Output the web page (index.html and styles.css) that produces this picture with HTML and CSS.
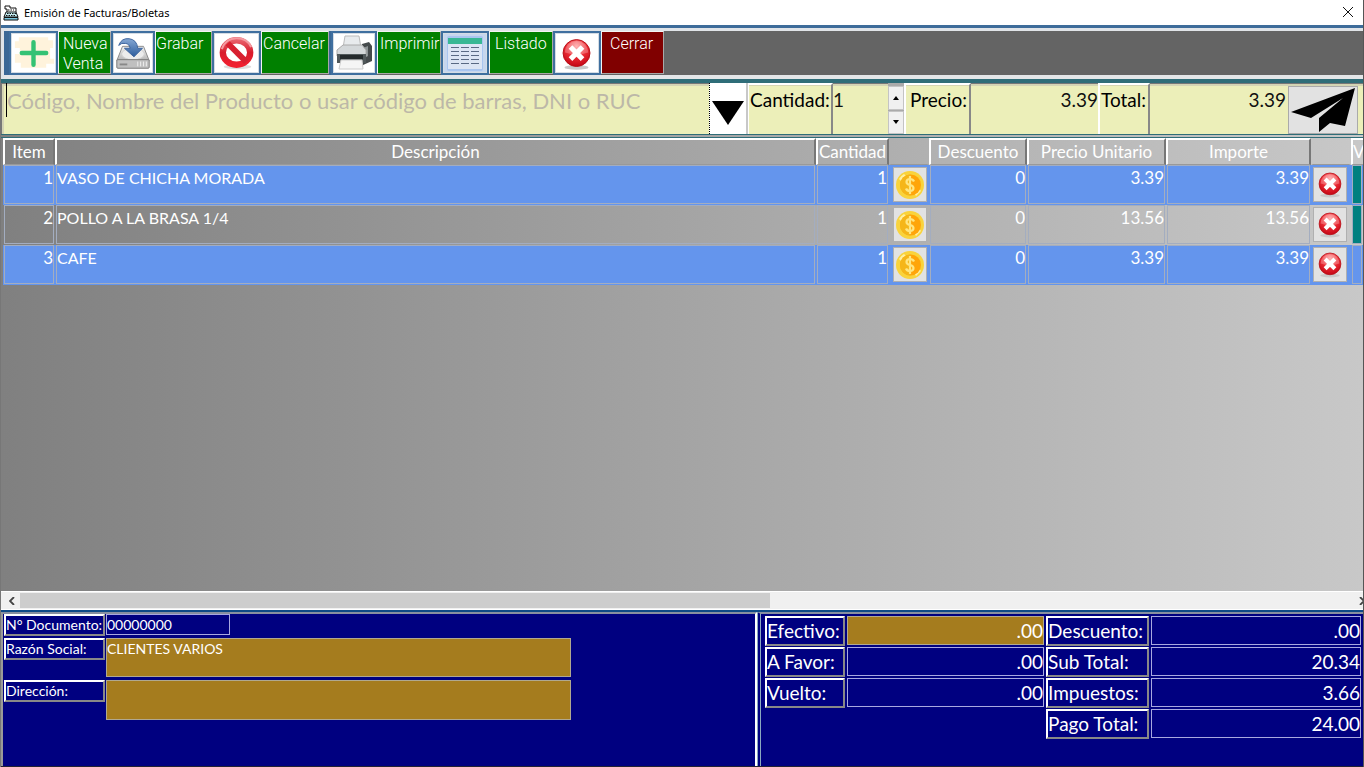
FILE: index.html
```html
<!DOCTYPE html>
<html lang="es">
<head>
<meta charset="utf-8">
<title>Emisión de Facturas/Boletas</title>
<link rel="stylesheet" href="styles.css">
</head>
<body>
<svg class="defs" aria-hidden="true">
  <defs>
    <radialGradient id="red" cx="50%" cy="25%" r="80%"><stop offset="0" stop-color="#ff9a9a"/><stop offset=".45" stop-color="#ee3038"/><stop offset="1" stop-color="#c00010"/></radialGradient>
    <linearGradient id="metal" x1="0" y1="0" x2="0" y2="1"><stop offset="0" stop-color="#f4f4f4"/><stop offset="1" stop-color="#b4b4b4"/></linearGradient>
    <linearGradient id="arrow" x1="0" y1="0" x2="0" y2="1"><stop offset="0" stop-color="#86a8d4"/><stop offset="1" stop-color="#2c5c9c"/></linearGradient>
    <linearGradient id="ring" x1="0" y1="0" x2="0" y2="1"><stop offset="0" stop-color="#e8606a"/><stop offset=".5" stop-color="#d81c2c"/><stop offset="1" stop-color="#f02030"/></linearGradient>
    <symbol id="close-badge" viewBox="0 0 32 34">
      <ellipse cx="16" cy="31" rx="13" ry="2.500" fill="#c9c9c9"/>
      <circle cx="16" cy="15.500" r="14.500" fill="url(#red)" stroke="#b40c14"/>
      <path d="M3.500 15a12.500 12.500 0 0 1 25 0q-12 4-25 0z" fill="#fff" opacity=".25"/>
      <path d="M9.500 9l13 13M22.500 9l-13 13" stroke="#fff" stroke-width="5.500"/>
    </symbol>
    <symbol id="coin" viewBox="0 0 28 28">
      <circle cx="14" cy="14" r="14" fill="#f9d33c"/>
      <path d="M3 8A13 13 0 0 1 8 3l3 3-5 5zM20 25l5-5-2-3-5 5z" fill="#fff0a0"/>
      <circle cx="14.500" cy="14" r="10.500" fill="#ffa509"/>
      <path d="M14.500 3.500a10.500 10.500 0 0 0 0 21z" fill="#f5b619"/>
      <path d="M18 10.500q-1-2.500-4-2.500-3.500 0-3.500 3 0 2.300 3.500 3t3.500 3q0 3-3.500 3-3 0-4-2.500M14 5v18" fill="none" stroke="#ffe680" stroke-width="2.200"/>
    </symbol>
  </defs>
</svg>
<main class="window">
  <header class="titlebar">
    <svg class="app-icon" viewBox="0 0 16 16" aria-hidden="true">
      <path d="M4 7V4H2V1h5v2h6v4" fill="#fff" stroke="#111"/>
      <path d="M3 7h10l2 5H1z" fill="#c4ecf2" stroke="#111"/>
      <path d="M5 5h6M4 8.500h9M3 10.500h10" stroke="#111" stroke-dasharray="1.500 1"/>
      <path d="M1 12.500h14v2.500H1z" fill="#7cc8e0" stroke="#111"/>
    </svg>
    <h1 class="title">Emisión de Facturas/Boletas</h1>
    <button class="win-close" aria-label="Cerrar ventana"><svg viewBox="0 0 12 12"><path d="M1 1l10 10M11 1L1 11" stroke="#111"/></svg></button>
  </header>

  <nav class="toolbar">
    <button class="tool tool-new">
      <svg class="tool-icon" viewBox="0 0 46 40"><path d="M8 4h30v3h5v8h-3v11h4v5h-8v4H10v-5H4v-9h5v-6H4V8h4z" fill="#fff3dc"/><path d="M23 9v23M11 20h25" stroke="#34c274" stroke-width="4.500" stroke-linecap="round"/></svg>
      <span class="tool-label">Nueva<br>Venta</span>
    </button>
    <button class="tool tool-save">
      <svg class="tool-icon" viewBox="0 0 42 40"><path d="M10 13h22l6 15H4z" fill="url(#metal)" stroke="#888"/><ellipse cx="21" cy="21" rx="12" ry="6" fill="#ececec" stroke="#d0d0d0"/><rect x="4" y="27" width="34" height="9" rx="1" fill="#c0c0c0" stroke="#777"/><path d="M7 32h8" stroke="#888" stroke-width="2"/><path d="M26 29v5M29 29v5M32 29v5M35 29v5" stroke="#eee"/><path d="M6 12Q9 4 17 5q8 1 9 10h5L22 24 12 15h6q-1-5-5-5-4-1-7 2z" fill="url(#arrow)" stroke="#3a629c"/></svg>
      <span class="tool-label">Grabar</span>
    </button>
    <button class="tool tool-cancel">
      <svg class="tool-icon" viewBox="0 0 46 40"><ellipse cx="24" cy="34" rx="14" ry="2.500" fill="#ddd"/><ellipse cx="23" cy="19.500" rx="14" ry="12.500" fill="#fff" stroke="url(#ring)" stroke-width="6.500"/><path d="M14 10l19 19" stroke="#d82030" stroke-width="6"/><path d="M8 16Q12 5 23 5t15 9" fill="none" stroke="#f49aa0" stroke-width="2"/></svg>
      <span class="tool-label">Cancelar</span>
    </button>
    <button class="tool tool-print">
      <svg class="tool-icon" viewBox="0 0 42 40"><path d="M29 11l7-2 3 4v15l-9 4z" fill="#454a4c"/><path d="M30 15l5-2v10l-5 3z" fill="#8d9496"/><path d="M12 3h14l2 12H10z" fill="#e8ebed" stroke="#bbb"/><path d="M4 17l6-5h19l4 5v6H4z" fill="#d4d8da" stroke="#aaa"/><path d="M4 21h29v9H4z" fill="#50585a"/><path d="M7 22h23v4H7z" fill="#242a2c"/><path d="M8 27h21l1 9H6z" fill="#f5f5f5" stroke="#ccc"/></svg>
      <span class="tool-label">Imprimir</span>
    </button>
    <button class="tool tool-list">
      <svg class="tool-icon" viewBox="0 0 42 40"><rect width="42" height="40" fill="#c6d6ee"/><rect x="3" y="3" width="36" height="35" rx="2" fill="#a9c5ef"/><path d="M4 11h34v25H4z" fill="#dce5f4"/><path d="M4 5h34v6H4z" fill="#38b894"/><path d="M7 14.500h8M17 14.500h8M27 14.500h8M7 18.500h8M17 18.500h8M27 18.500h8M7 22.500h8M17 22.500h8M27 22.500h8M7 26.500h8M17 26.500h8M27 26.500h8M7 30.500h8M17 30.500h8M27 30.500h8" stroke="#596984"/></svg>
      <span class="tool-label">Listado</span>
    </button>
    <button class="tool tool-close">
      <svg class="tool-icon" viewBox="0 0 46 40"><use href="#close-badge" x="6" y="5" width="33" height="33"/></svg>
      <span class="tool-label">Cerrar</span>
    </button>
  </nav>

  <form class="entry">
    <input class="entry-search" type="text" aria-label="Producto" placeholder="Código, Nombre del Producto o usar código de barras, DNI o RUC">
    <button class="entry-drop" type="button" aria-label="Desplegar"><svg viewBox="0 0 32 24"><path d="M0 0h32L16 24z"/></svg></button>
    <label class="entry-label label-qty" for="qty">Cantidad:</label>
    <div class="stepper">
      <input class="entry-value entry-qty" id="qty" type="text" value="1">
      <div class="spin">
        <button type="button" aria-label="Más"><svg viewBox="0 0 6 4"><path d="M0 4h6L3 0z"/></svg></button>
        <button type="button" aria-label="Menos"><svg viewBox="0 0 6 4"><path d="M0 0h6L3 4z"/></svg></button>
      </div>
    </div>
    <label class="entry-label label-price" for="price">Precio:</label>
    <input class="entry-value entry-price" id="price" type="text" value="3.39">
    <label class="entry-label label-total" for="total">Total:</label>
    <input class="entry-value entry-total" id="total" type="text" value="3.39">
    <button class="entry-send" type="button" aria-label="Enviar"><svg viewBox="0 0 64 44"><path d="M0 24L64 0 54 38 39 35 28 44V30L52 10 20 30z"/></svg></button>
  </form>

  <section class="grid">
    <table class="items">
      <colgroup><col class="c-item"><col><col class="c-qty"><col class="c-btn"><col class="c-disc"><col class="c-price"><col class="c-amount"><col class="c-btn"><col class="c-more"></colgroup>
      <thead>
        <tr><th>Item</th><th>Descripción</th><th>Cantidad</th><th class="bare"></th><th>Descuento</th><th>Precio Unitario</th><th>Importe</th><th class="bare"></th><th class="more">V</th></tr>
      </thead>
      <tbody>
        <tr class="blue"><td class="num"><div>1</div></td><td class="desc"><div>VASO DE CHICHA MORADA</div></td><td class="num"><div>1</div></td><td class="act"><button aria-label="Precio"><svg class="coin"><use href="#coin"/></svg></button></td><td class="num"><div>0</div></td><td class="num"><div>3.39</div></td><td class="num"><div>3.39</div></td><td class="act act-remove"><button aria-label="Quitar"><svg class="remove"><use href="#close-badge"/></svg></button></td><td><div class="teal"></div></td></tr>
        <tr><td class="num"><div>2</div></td><td class="desc"><div>POLLO A LA BRASA 1/4</div></td><td class="num"><div>1</div></td><td class="act"><button aria-label="Precio"><svg class="coin"><use href="#coin"/></svg></button></td><td class="num"><div>0</div></td><td class="num"><div>13.56</div></td><td class="num"><div>13.56</div></td><td class="act act-remove"><button aria-label="Quitar"><svg class="remove"><use href="#close-badge"/></svg></button></td><td><div class="teal"></div></td></tr>
        <tr class="blue"><td class="num"><div>3</div></td><td class="desc"><div>CAFE</div></td><td class="num"><div>1</div></td><td class="act"><button aria-label="Precio"><svg class="coin"><use href="#coin"/></svg></button></td><td class="num"><div>0</div></td><td class="num"><div>3.39</div></td><td class="num"><div>3.39</div></td><td class="act act-remove"><button aria-label="Quitar"><svg class="remove"><use href="#close-badge"/></svg></button></td><td><div></div></td></tr>
      </tbody>
    </table>
  </section>
  <div class="scrollbar">
    <button class="scroll-btn" aria-label="Izquierda"><svg viewBox="0 0 6 8"><path d="M5 0L1 4l4 4" fill="none" stroke="#444" stroke-width="1.800"/></svg></button>
    <div class="scroll-track"><div class="scroll-thumb"></div></div>
    <button class="scroll-btn scroll-end" aria-label="Derecha"><svg viewBox="0 0 6 8"><path d="M1 0l4 4-4 4" fill="none" stroke="#444" stroke-width="1.800"/></svg></button>
  </div>

  <footer class="panels">
    <form class="panel customer">
      <label class="box-label" for="doc">N° Documento:</label><input class="field doc" id="doc" type="text" value="00000000">
      <label class="box-label" for="name">Razón Social:</label><textarea class="field gold" id="name">CLIENTES VARIOS</textarea>
      <label class="box-label" for="addr">Dirección:</label><textarea class="field gold addr" id="addr"></textarea>
    </form>
    <form class="panel totals">
      <label class="box-label" for="t1">Efectivo:</label><input class="field gold" id="t1" type="text" value=".00">
      <label class="box-label" for="t2">Descuento:</label><input class="field" id="t2" type="text" value=".00">
      <label class="box-label" for="t3">A Favor:</label><input class="field" id="t3" type="text" value=".00">
      <label class="box-label" for="t4">Sub Total:</label><input class="field" id="t4" type="text" value="20.34">
      <label class="box-label" for="t5">Vuelto:</label><input class="field" id="t5" type="text" value=".00">
      <label class="box-label" for="t6">Impuestos:</label><input class="field" id="t6" type="text" value="3.66">
      <label class="box-label pay" for="t7">Pago Total:</label><input class="field" id="t7" type="text" value="24.00">
    </form>
  </footer>
</main>
</body>
</html>
```
FILE: styles.css
```css
* { box-sizing: border-box; }
body { margin: 0; font-family: Lato, "Open Sans", sans-serif; }
button, input, textarea { font: inherit; margin: 0; padding: 0; border: 0; border-radius: 0; outline: 0; }
svg { display: block; }
.defs { position: absolute; width: 0; height: 0; }

.window {
  display: flex;
  flex-direction: column;
  height: 100vh;
  overflow: hidden;
  background: #fff;
  border-left: 1px solid #777;
  border-right: 1px solid #555;
}

.titlebar { display: flex; align-items: center; gap: 5px; height: 25px; padding: 0 9px 0 2px; flex: none; }
.app-icon { width: 16px; height: 16px; }
.title { flex: 1; margin: 0; font: 400 11px/16px "Noto Sans", sans-serif; color: #000; }
.win-close { background: none; width: 12px; height: 12px; margin-bottom: 2px; }

.toolbar {
  display: flex;
  flex: none;
  height: 54px;
  padding: 3px 0 4px 3px;
  border-top: 3px solid #3d6c9a;
  background: #646464;
  box-shadow: inset 3px 3px #e0e4e8, inset 0 -4px #e4e6e8;
}
.tool { display: flex; align-items: stretch; background: none; text-align: left; }
.tool:first-child { border-left: 5px solid #3b6896; }
.tool-icon { flex: none; height: 44px; background: #fff; border: 2px solid #3f6f9f; outline: 1px solid #d4dce4; outline-offset: -3px; }
.tool-label {
  flex: none;
  height: 43px;
  padding: 2px 0 0 5px;
  border: 1px solid;
  border-color: #f4f4f4 #a8a8a8 #a8a8a8 #f4f4f4;
  background: #008000;
  color: #fff;
  font: 300 16px/20px Roboto, sans-serif;
}
.tool-new .tool-icon { width: 49px; }
.tool-new .tool-label { width: 53px; padding-left: 4px; }
.tool-save .tool-icon { width: 44px; }
.tool-save .tool-label { width: 57px; padding-left: 0; }
.tool-cancel .tool-icon { width: 49px; }
.tool-cancel .tool-label { width: 68px; padding-left: 1px; }
.tool-print { border-left: 2px solid #3b6896; }
.tool-print .tool-icon { width: 46px; }
.tool-print .tool-label { width: 64px; padding-left: 2px; }
.tool-list .tool-icon { width: 48px; }
.tool-list .tool-label { width: 64px; }
.tool-close .tool-icon { width: 48px; }
.tool-close .tool-label { width: 63px; padding-left: 8px; background: #800000; }

.entry {
  display: flex;
  flex: none;
  height: 55px;
  padding-left: 5px;
  border-top: 4px solid #2f6d78;
  background: #ecefb9;
  font-size: 19px;
  line-height: 24px;
  box-shadow: inset 1px 1px #777, inset 3px 3px #d4d4b4;
}
.entry-search { flex: 1; min-width: 0; height: 34px; background: none; font-size: 22px; border-left: 1px solid #000; }
.entry-search::placeholder { color: #bcb8a8; opacity: 1; }
.entry-drop { display: flex; justify-content: center; align-items: center; width: 39px; padding-top: 8px; background: #fff; border-left: 1px dotted #000; border-right: 2px solid #c8c8c8; }
.entry-drop svg { width: 32px; height: 24px; }
.entry-label { padding: 3px 0 0 1px; border-top: 2px solid #fff; border-left: 1px solid #fff; border-right: 2px solid #888; white-space: nowrap; overflow: hidden; }
.label-qty { width: 85px; }
.label-price { width: 67px; padding-left: 4px; border-left: 2px solid #fff; }
.label-total { width: 52px; border-left-width: 2px; }
.stepper { display: flex; width: 71px; }
.entry-value { height: 32px; min-width: 0; color: #111; background: none; }
.entry-qty { flex: 1; }
.spin { display: flex; flex-direction: column; gap: 1px; width: 16px; padding-top: 3px; background: #aaa; }
.spin button { display: flex; flex: 1; align-items: center; justify-content: center; background: #f0f0f0; border: 1px solid #c4c4c4; }
.spin svg { width: 6px; height: 4px; }
.entry-price { width: 127px; text-align: right; }
.entry-total { width: 136px; text-align: right; }
.entry-send { display: flex; justify-content: center; align-items: center; width: 70px; margin: 3px 5px 0 2px; background: #e2e2e2; border: 1px solid #aaa; }
.entry-send svg { width: 64px; height: 44px; }

.grid {
  flex: 1;
  min-height: 0;
  overflow: hidden;
  padding-left: 2px;
  border-top: 4px double #2f6d78;
  background: linear-gradient(90deg, #808080, #c8c8c8);
  color: #fff;
}
.items { width: 100%; table-layout: fixed; border-collapse: separate; border-spacing: 0; font-size: 17px; line-height: 22px; }
.c-item { width: 52px; }
.c-qty { width: 73px; }
.c-btn { width: 40px; }
.c-disc { width: 98px; }
.c-price { width: 139px; }
.c-amount { width: 145px; }
.c-more { width: 12px; }
.items th { height: 27px; padding: 0; font-weight: 400; white-space: nowrap; overflow: hidden; border-top: 2px solid #fff; border-left: 2px solid #fff; border-right: 2px solid #777; border-bottom: 1px solid #999; }
.items th.bare { border-top-color: transparent; border-left-color: transparent; border-right-color: transparent; }
.items th.more { border-right: 0; text-align: left; }
.items td { height: 40px; padding: 0 1px; vertical-align: top; }
.items td > div { height: 39px; padding-top: 1px; border: 1px solid #a3adc0; }
.items .desc { font-size: 16px; }
.items tr.blue td { background: #6495ed; }
.items .num { text-align: right; }
.items td > .teal { background: #008080; }
.items .act { padding: 2px 2px 0 4px; }
.items .act-remove { padding-left: 2px; }
.act button { display: flex; align-items: center; justify-content: center; width: 34px; height: 35px; background: #e2e2e2; border: 1px solid #b0b0b0; }
.coin { width: 28px; height: 28px; }
.remove { width: 24px; height: 26px; }

.scrollbar { display: flex; flex: none; height: 19px; padding-left: 2px; background: #f0f0f0; border-top: 1px solid #fff; border-bottom: 1px solid #fff; overflow: hidden; }
.scroll-btn { display: flex; flex: none; align-items: center; justify-content: center; width: 17px; background: #f0f0f0; }
.scroll-btn svg { width: 6px; height: 8px; flex: none; }
.scroll-end { width: 4px; justify-content: flex-start; }
.scroll-track { flex: 1; }
.scroll-thumb { width: 56%; height: 15px; background: #cdcdcd; margin-top: 1px; }

.panels { display: grid; grid-template-columns: minmax(0, 756fr) minmax(0, 606fr); flex: none; height: 157px; border-top: 2px solid #0f4a86; border-bottom: 1px solid #223; }
.panel { background: #000080; border-top: 2px solid #8890a0; border-left: 2px solid #999; color: #fff; }
.customer { display: grid; grid-template-columns: 101px minmax(0, 465px); grid-template-rows: 21px 39px 40px; gap: 3px 1px; padding: 0 0 0 1px; border-right: 2px solid #fff; font-size: 14px; line-height: 16px; align-content: start; }
.totals { display: grid; grid-template-columns: 80px minmax(0, 198fr) 103px minmax(0, 211fr); grid-auto-rows: 29px; gap: 2px; padding: 2px 2px 0 4px; border-left: 4px double #8aa8c0; font-size: 19px; line-height: 24px; align-content: start; }
.box-label { align-self: start; border: 2px solid; border-color: #fff #888 #888 #fff; white-space: nowrap; overflow: hidden; }
.customer .box-label { height: 22px; padding-top: 1px; }
.totals .box-label { height: 30px; padding-top: 1px; }
.field { display: block; width: 100%; background: transparent; color: #fff; border: 1px solid #a8a8e0; resize: none; overflow: hidden; }
.doc { width: 124px; }
.gold { background: #a57c1e; border-color: #b0a890; }
.totals .field { text-align: right; }
.pay { grid-column: 3; }
.customer textarea { padding-top: 2px; }
```
